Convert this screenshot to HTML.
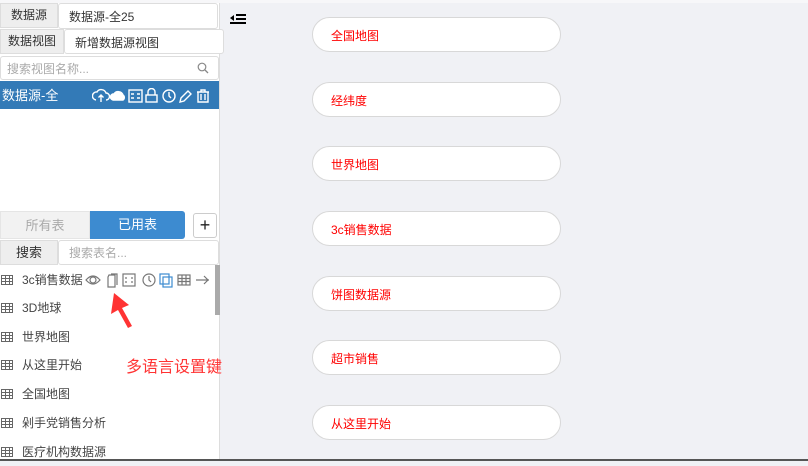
<!DOCTYPE html>
<html><head><meta charset="utf-8"><style>
*{box-sizing:border-box;margin:0;padding:0}
body{width:808px;height:461px;overflow:hidden;background:#f0f1f5;font-family:"Liberation Sans","Noto Sans CJK SC",sans-serif;font-size:12px;color:#333;position:relative}
.a{position:absolute}
.lbl{background:#eee;border:1px solid #ddd;color:#333;text-align:center;font-size:12px}
.inp{background:#fff;border:1px solid #ddd;border-radius:3px;font-size:12px;padding-left:10px}
.btn{position:absolute;left:312px;width:249px;height:35px;background:#fff;border:1px solid #d8d8d8;border-radius:18px;color:#f00;font-size:12px;line-height:37px;padding-left:18px}
.row{position:absolute;left:0;width:214px;height:28px;line-height:28px;font-size:12px;color:#444;padding-left:22px}
.ti{position:absolute;left:1px;top:9px;width:12px;height:10px;border:1px solid #666;background:
linear-gradient(#666,#666) 0 2px/100% 1px no-repeat,linear-gradient(#666,#666) 0 5px/100% 1px no-repeat,linear-gradient(#666,#666) 3px 0/1px 100% no-repeat,linear-gradient(#666,#666) 7px 0/1px 100% no-repeat}
</style></head><body>
<div class="a" style="left:0;top:0;width:808px;height:3px;background:#f7f7f9"></div>
<div class="a" style="left:0;top:3px;width:220px;height:456px;background:#fff;border-right:1px solid #ddd"></div>
<div class="a lbl" style="left:0;top:3px;width:58px;height:25px;line-height:23px">数据源</div>
<div class="a inp" style="left:58px;top:3px;width:160px;height:26px;line-height:26px">数据源-全25</div>
<div class="a lbl" style="left:0;top:29px;width:64px;height:25px;line-height:23px">数据视图</div>
<div class="a inp" style="left:64px;top:29px;width:160px;height:25px;line-height:27px">新增数据源视图</div>
<div class="a inp" style="left:0;top:56px;width:219px;height:24px;line-height:24px;padding-left:6px;color:#aaa">搜索视图名称...</div>
<svg class="a" style="left:197px;top:62px" width="12" height="12"><circle cx="5" cy="5" r="3.8" fill="none" stroke="#888" stroke-width="1.2"/><path d="M8 8L11 11" stroke="#888" stroke-width="1.3"/></svg>
<div class="a" style="left:0;top:81px;width:219px;height:28px;background:#337ab7;color:#fff;font-size:13px;line-height:30px;padding-left:2px">数据源-全</div>
<svg class="a" style="left:92px;top:88px" width="124" height="16" fill="none" stroke="#fff" stroke-width="1.4">
<path d="M4 12a4 4 0 0 1 1-8a5 5 0 0 1 9 1a3 3 0 0 1 0 7M9 14V7M6.5 9.5L9 7l2.5 2.5"/>
<path d="M21 12a3 3 0 0 1 1-6a5 5 0 0 1 9 1a3 3 0 0 1 0 5z" fill="#fff"/>
<rect x="37" y="2" width="13" height="12"/><path d="M39 6h3M45 6h3M39 10h3M45 10h3"/>
<rect x="54" y="7" width="11" height="7"/><path d="M56 7V4a3.5 3.5 0 0 1 7 0v3"/>
<circle cx="77" cy="8" r="6"/><path d="M77 4v4l2 2"/>
<path d="M88 14l1-4 7-7 3 3-7 7z"/>
<path d="M105 4h12M109 4V2h4v2M106 4v10h10V4M109 6v6M113 6v6"/>
</svg>
<div class="a" style="left:236px;top:14px;width:10px;height:1.5px;background:#000"></div>
<div class="a" style="left:236px;top:18px;width:10px;height:1.5px;background:#000"></div>
<div class="a" style="left:230px;top:22px;width:16px;height:1.5px;background:#000"></div>
<div class="a" style="left:230px;top:14px;width:0;height:0;border-top:3px solid transparent;border-bottom:3px solid transparent;border-right:4px solid #000;transform:translateY(1px)"></div>
<div class="a" style="left:0;top:211px;width:90px;height:28px;background:#f2f2f2;color:#aaa;text-align:center;line-height:28px;font-size:13px;border:1px solid #e5e5e5">所有表</div>
<div class="a" style="left:90px;top:211px;width:95px;height:28px;background:#3d8bd0;color:#fff;text-align:center;line-height:28px;font-size:13px;border-radius:0 3px 3px 0">已用表</div>
<div class="a" style="left:193px;top:213px;width:24px;height:25px;border:1px solid #ccc;border-radius:3px;background:#fff;text-align:center;line-height:22px;font-size:18px;color:#222">+</div>
<div class="a lbl" style="left:0;top:240px;width:58px;height:25px;line-height:23px;font-size:13px">搜索</div>
<div class="a inp" style="left:58px;top:240px;width:161px;height:25px;line-height:24px;color:#aaa">搜索表名...</div>
<div class="a" style="left:215px;top:265px;width:5px;height:50px;background:#aaa"></div>
<div class="row" style="top:266px"><span class="ti"></span>3c销售数据</div>
<div class="a" style="left:83px;top:268px;width:129px;height:24px;background:#fff"></div>
<svg class="a" style="left:85px;top:272px" width="126" height="16" fill="none" stroke="#777" stroke-width="1.2">
<path d="M1 8q7-8 14 0q-7 8-14 0z"/><circle cx="8" cy="8" r="3"/>
<path d="M24 3h6v12h-7V5zM26 2h6v11"/>
<rect x="38" y="2" width="12" height="12"/><path d="M40 6h2M46 6h2M40 10h2M46 10h2"/>
<circle cx="64" cy="8" r="6"/><path d="M64 4v4l2 2"/>
<rect x="75" y="2" width="9" height="10" stroke="#3d8bd0"/><rect x="78" y="5" width="9" height="10" stroke="#3d8bd0"/>
<rect x="93" y="3" width="12" height="10"/><path d="M93 6.5h12M93 9.5h12M97 3v10M101 3v10"/>
<path d="M111 8h13M119 4l4 4-4 4"/>
</svg>
<div class="row" style="top:294px"><span class="ti"></span>3D地球</div>
<div class="row" style="top:323px"><span class="ti"></span>世界地图</div>
<div class="row" style="top:351px"><span class="ti"></span>从这里开始</div>
<div class="row" style="top:380px"><span class="ti"></span>全国地图</div>
<div class="row" style="top:409px"><span class="ti"></span>剁手党销售分析</div>
<div class="row" style="top:438px"><span class="ti"></span>医疗机构数据源</div>
<svg class="a" style="left:108px;top:290px" width="32" height="52"><path d="M6 3L3 24l7-4 10 18 4-2-10-18 7-3z" fill="#f33"/></svg>
<div class="a" style="left:126px;top:353px;color:#f33;font-size:16px">多语言设置键</div>
<div class="a" style="left:0;top:459px;width:808px;height:2px;background:#555"></div>
<div class="btn" style="top:17px">全国地图</div>
<div class="btn" style="top:82px">经纬度</div>
<div class="btn" style="top:146px">世界地图</div>
<div class="btn" style="top:211px">3c销售数据</div>
<div class="btn" style="top:276px">饼图数据源</div>
<div class="btn" style="top:340px">超市销售</div>
<div class="btn" style="top:405px">从这里开始</div>
</body></html>
